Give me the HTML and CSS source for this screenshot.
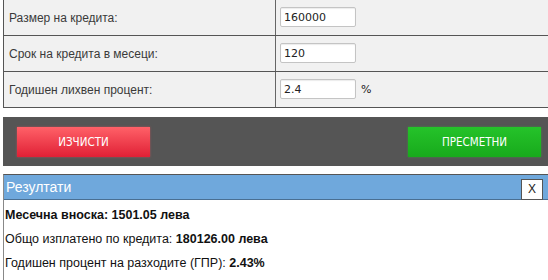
FILE: index.html
```html
<!DOCTYPE html>
<html>
<head>
<meta charset="utf-8">
<link rel="stylesheet" href="styles.css">
</head>
<body>
<div class="wrap">
  <div class="form">
    <div class="row">
      <div class="label">Размер на кредита:</div>
      <div class="field"><input class="inp" type="text" value="160000"></div>
    </div>
    <div class="row">
      <div class="label">Срок на кредита в месеци:</div>
      <div class="field"><input class="inp" type="text" value="120"></div>
    </div>
    <div class="row">
      <div class="label">Годишен лихвен процент:</div>
      <div class="field"><input class="inp" type="text" value="2.4"><span class="unit">%</span></div>
    </div>
  </div>
  <div class="bar">
    <button class="btn btn-red">ИЗЧИСТИ</button>
    <button class="btn btn-green">ПРЕСМЕТНИ</button>
  </div>
  <div class="results">
    <div class="res-head">
      <span class="res-title">Резултати</span>
      <span class="close">X</span>
    </div>
    <div class="res-body">
      <div class="line"><b>Месечна вноска: 1501.05 лева</b></div>
      <div class="line">Общо изплатено по кредита: <b>180126.00 лева</b></div>
      <div class="line">Годишен процент на разходите (ГПР): <b>2.43%</b></div>
    </div>
  </div>
</div>
</body>
</html>
```
FILE: styles.css
```css
html, body {
  margin: 0;
  padding: 0;
  background: #fff;
  overflow: hidden;
}
body {
  font-family: "Liberation Sans", Arial, sans-serif;
  color: #333;
  font-size: 13px;
}
.wrap {
  margin-left: 3px;
  width: 551px;
}
.form {
  border-left: 1px solid #555;
  background: #f1f1f1;
}
.row {
  display: flex;
  height: 35px;
  border-bottom: 1px solid #555;
}
.label {
  width: 266px;
  padding-left: 5px;
  border-right: 1px solid #666;
  display: flex;
  align-items: center;
  color: #3a3a3a;
  font-size: 12px;
}
.field {
  display: flex;
  align-items: center;
  padding-left: 4px;
  padding-bottom: 1px;
}
.inp {
  box-sizing: border-box;
  width: 76px;
  height: 20px;
  border: 1px solid #c4c4c4;
  border-radius: 2px;
  background: #fff;
  font-family: "DejaVu Sans", Verdana, sans-serif;
  font-size: 11px;
  color: #222;
  padding: 1px 3px 0 3px;
  margin: 0;
  box-shadow: inset 0 1px 1px rgba(0,0,0,0.08);
}
.unit {
  margin-left: 5px;
  font-family: "DejaVu Sans", Verdana, sans-serif;
  font-size: 11px;
  color: #222;
}
.bar {
  margin-top: 9px;
  background: #555;
  height: 49px;
  display: flex;
  align-items: center;
  justify-content: space-between;
  padding: 0 13px 0 14px;
  box-sizing: border-box;
}
.btn {
  width: 133px;
  height: 30px;
  border: none;
  margin: 0;
  padding: 0;
  color: #fff;
  font-family: "DejaVu Sans Condensed", "DejaVu Sans", Tahoma, sans-serif;
  font-size: 11.5px;
  cursor: pointer;
}
.btn-red {
  background: linear-gradient(#ff6168, #e02035);
  box-shadow: 0 0 2px rgba(255,80,90,0.5);
}
.btn-green {
  background: linear-gradient(#25c32a, #18aa1c);
  box-shadow: 0 0 2px rgba(40,200,40,0.5);
}
.results {
  margin-top: 8px;
  border-top: 1px solid #555;
  border-left: 1px solid #888;
  border-bottom: 3px solid #aaa;
}
.res-head {
  background: #6fa8dc;
  height: 24px;
  border-bottom: 1px solid #4a6f92;
  display: flex;
  align-items: center;
  justify-content: space-between;
  padding-left: 2px;
  padding-right: 11px;
}
.res-title {
  color: #fff;
  font-size: 14px;
}
.close {
  box-sizing: border-box;
  width: 22px;
  height: 21px;
  margin-top: 4px;
  background: #fff;
  border: 1px solid #555;
  display: flex;
  align-items: center;
  justify-content: center;
  font-size: 12px;
  color: #222;
}
.res-body {
  padding: 3px 0 5px 1px;
  background: #fff;
}
.line {
  height: 24px;
  line-height: 24px;
  color: #111;
  font-size: 12.5px;
}
.line b {
  color: #111;
}
```
